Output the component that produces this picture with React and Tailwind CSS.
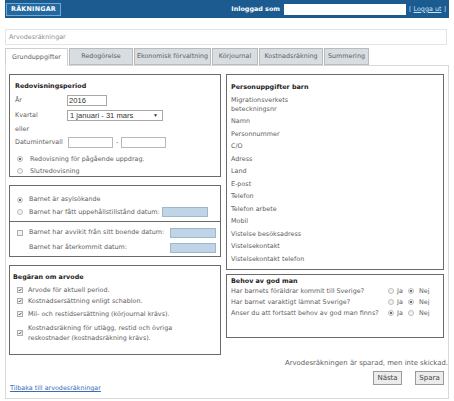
import React from "react";

function Radio({ checked }) {
  return (
    <span className="inline-flex w-[6px] h-[6px] shrink-0 rounded-full border border-[#bdbdbd] bg-[#f3f3f3] items-center justify-center">
      {checked && <span className="w-[2px] h-[2px] rounded-full bg-[#444]" />}
    </span>
  );
}

function Check({ checked }) {
  return (
    <span className="inline-flex w-[6px] h-[6px] shrink-0 border border-[#adadad] bg-[#f3f3f3] items-center justify-center">
      {checked && (
        <svg width="6" height="6" viewBox="0 0 6 6">
          <path d="M1 3 L2.4 4.5 L5 1.2" stroke="#333" strokeWidth="1.1" fill="none" />
        </svg>
      )}
    </span>
  );
}

function BlueInput({ w = "w-[46px]" }) {
  return <span className={`block ${w} h-[10px] bg-[#bfd4e6] border border-[#9fb7c9]`} />;
}

const tabs = [
  { label: "Grunduppgifter", w: "w-[63px]", active: true },
  { label: "Redogörelse", w: "w-[64px]" },
  { label: "Ekonomisk förvaltning", w: "w-[77px]" },
  { label: "Körjournal", w: "w-[46px]" },
  { label: "Kostnadsräkning", w: "w-[64px]" },
  { label: "Summering", w: "w-[45px]" },
];

const person = [
  "Namn",
  "Personnummer",
  "C/O",
  "Adress",
  "Land",
  "E-post",
  "Telefon",
  "Telefon arbete",
  "Mobil",
  "Vistelse besöksadress",
  "Vistelsekontakt",
  "Vistelsekontakt telefon",
];

const questions = [
  { q: "Har barnets föräldrar kommit till Sverige?", ja: false },
  { q: "Har barnet varaktigt lämnat Sverige?", ja: false },
  { q: "Anser du att fortsatt behov av god man finns?", ja: true },
];

export default function App() {
  return (
    <div className="w-[454px] h-[401px] bg-white overflow-hidden font-['DejaVu_Sans',sans-serif] text-[6.4px] text-[#606060] leading-none">
      {/* header bar */}
      <div className="mx-[5px] h-[18px] bg-[#1c5b8f] flex items-center">
        <div className="ml-[1px] w-[55px] h-[13px] border border-[#6ea9d8] bg-[#2468a0] text-white font-bold flex items-center justify-center tracking-[0.2px]">
          RÄKNINGAR
        </div>
        <div className="flex-1" />
        <span className="text-white font-bold">Inloggad som</span>
        <span className="ml-[4px] w-[122px] h-[11px] bg-white" />
        <span className="ml-[3px] mr-[3px] text-[#c9e4ff] whitespace-nowrap">
          [ <span className="underline">Logga ut</span> ]
        </span>
      </div>

      {/* breadcrumb */}
      <div className="mt-[11px] ml-[5px] w-[442px] h-[16px] border border-[#e4e4e4] flex items-center pl-[3px] text-[#8f8f8f]">
        Arvodesräkningar
      </div>

      {/* tabs */}
      <div className="mt-[3px] ml-[5px] flex h-[17px] text-[#606060]">
        {tabs.map((t) => (
          <div
            key={t.label}
            className={`${t.w} shrink-0 flex items-center justify-center whitespace-nowrap border ${
              t.active
                ? "bg-white border-[#cfcfcf] border-b-white relative z-10 h-[18px]"
                : "bg-[#d8dde1] border-[#b9bcbf] ml-[1px]"
            }`}
          >
            {t.label}
          </div>
        ))}
      </div>

      {/* panel */}
      <div className="ml-[5px] w-[444px] h-[334px] border border-[#d9d9d9] pt-[8px] pl-[3px] flex gap-[5px]">
        {/* left column */}
        <div className="w-[212px] flex flex-col">
          <div className="h-[103px] border border-[#6a6a6a] pl-[5px] pt-[8px]">
            <div className="font-bold text-[#222] h-[6px] flex items-center">Redovisningsperiod</div>
            <div className="mt-[6px] flex items-center h-[11px]">
              <span className="w-[52px]">År</span>
              <span className="w-[40px] h-[11px] border border-[#a8a8a8] font-['Liberation_Sans',sans-serif] text-[7.6px] text-[#333] flex items-center pl-[1px]">
                2016
              </span>
            </div>
            <div className="mt-[4px] flex items-center h-[11px]">
              <span className="w-[52px]">Kvartal</span>
              <span className="w-[96px] h-[11px] border border-[#a8a8a8] font-['Liberation_Sans',sans-serif] text-[7.6px] text-[#333] flex items-center pl-[2px] pr-[4px] justify-between">
                1 januari - 31 mars
                <span className="text-[5px]">▼</span>
              </span>
            </div>
            <div className="mt-[4px] h-[8px] flex items-center">eller</div>
            <div className="mt-[4px] flex items-center h-[11px]">
              <span className="w-[53px] whitespace-nowrap">Datumintervall</span>
              <span className="w-[45px] h-[11px] border border-[#b8b8b8]" />
              <span className="mx-[3px]">-</span>
              <span className="w-[45px] h-[11px] border border-[#b8b8b8]" />
            </div>
            <div className="mt-[7px] flex items-center h-[8px] pl-[2px] gap-[7px]">
              <Radio checked />
              <span>Redovisning för pågående uppdrag.</span>
            </div>
            <div className="mt-[4px] flex items-center h-[8px] pl-[2px] gap-[7px]">
              <Radio />
              <span>Slutredovisning</span>
            </div>
          </div>

          <div className="mt-[8px] h-[72px] border border-[#6a6a6a]">
            <div className="h-[36px] border-b border-[#6a6a6a] pl-[7px] pt-[10px]">
              <div className="flex items-center h-[7px] gap-[6px]">
                <Radio checked />
                <span>Barnet är asylsökande</span>
              </div>
              <div className="mt-[4px] flex items-center h-[10px] gap-[6px]">
                <Radio />
                <span className="w-[127px] whitespace-nowrap">Barnet har fått uppehållstillstånd datum:</span>
                <BlueInput />
              </div>
            </div>
            <div className="pl-[7px] pt-[5px]">
              <div className="flex items-center h-[11px]">
                <Check />
                <span className="ml-[6px] w-[141px] whitespace-nowrap">Barnet har avvikit från sitt boende datum:</span>
                <BlueInput />
              </div>
              <div className="mt-[4px] flex items-center h-[11px]">
                <span className="ml-[12px] w-[141px] whitespace-nowrap">Barnet har återkommit datum:</span>
                <BlueInput />
              </div>
            </div>
          </div>

          <div className="mt-[8px] h-[90px] border border-[#6a6a6a] pl-[3px] pt-[8px]">
            <div className="font-bold text-[#222] h-[6px] flex items-center">Begäran om arvode</div>
            <div className="pl-[4px]">
              <div className="mt-[7px] flex items-center h-[6px] gap-[5px]">
                <Check checked />
                <span>Arvode för aktuell period.</span>
              </div>
              <div className="mt-[5px] flex items-center h-[6px] gap-[5px]">
                <Check checked />
                <span>Kostnadsersättning enligt schablon.</span>
              </div>
              <div className="mt-[7px] flex items-center h-[6px] gap-[5px]">
                <Check checked />
                <span>Mil- och restidsersättning (körjournal krävs).</span>
              </div>
              <div className="mt-[6px] flex items-center gap-[5px]">
                <Check checked />
                <span className="leading-[10px]">
                  Kostnadsräkning för utlägg, restid och övriga
                  <br />
                  reskostnader (kostnadsräkning krävs).
                </span>
              </div>
            </div>
          </div>

          <div className="mt-[30px] pl-[1px] h-[7px] flex items-center text-[#3a6db3] underline whitespace-nowrap">
            Tilbaka till arvodesräkningar
          </div>
        </div>

        {/* right column */}
        <div className="w-[218px] flex flex-col">
          <div className="h-[196px] border border-[#6a6a6a] pl-[4px] pt-[9px]">
            <div className="font-bold text-[#222] h-[6px] flex items-center">Personuppgifter barn</div>
            <div className="mt-[6px] leading-[9px]">
              Migrationsverkets
              <br />
              beteckningsnr
            </div>
            <div className="mt-[1px]">
              {person.map((p) => (
                <div key={p} className="h-[12.5px] flex items-center">
                  {p}
                </div>
              ))}
            </div>
          </div>

          <div className="mt-[4px] h-[64px] border border-[#6a6a6a] pl-[4px] pt-[3px]">
            <div className="font-bold text-[#222] h-[6px] flex items-center">Behov av god man</div>
            {questions.map((q, i) => (
              <div key={i} className="mt-[3px] flex items-center h-[8px]">
                <span className="w-[157px] whitespace-nowrap">{q.q}</span>
                <Radio checked={q.ja} />
                <span className="ml-[3px] w-[11px]">Ja</span>
                <Radio checked={!q.ja} />
                <span className="ml-[5px]">Nej</span>
              </div>
            ))}
          </div>

          <div className="mt-[22px] h-[7px] flex items-center justify-end whitespace-nowrap mr-[-4px] text-[6.9px]">
            Arvodesräkningen är sparad, men inte skickad.
          </div>
          <div className="mt-[4px] flex justify-end gap-[13px]">
            <span className="w-[29px] h-[14px] border border-[#9a9a9a] bg-[#ececec] flex items-center justify-center text-[7px] text-[#444]">
              Nästa
            </span>
            <span className="w-[29px] h-[14px] border border-[#9a9a9a] bg-[#ececec] flex items-center justify-center text-[7px] text-[#444]">
              Spara
            </span>
          </div>
        </div>
      </div>
    </div>
  );
}
